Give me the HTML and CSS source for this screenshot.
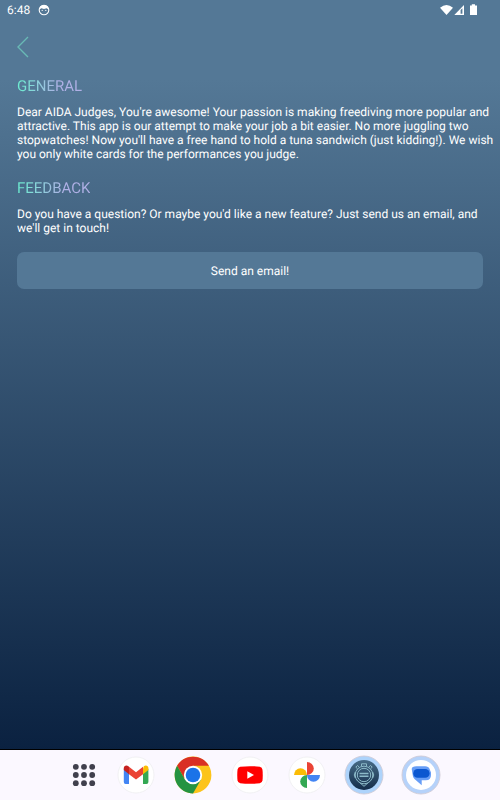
FILE: index.html
```html
<!DOCTYPE html>
<html lang="en">
<head>
<meta charset="utf-8">
<meta name="viewport" content="width=device-width, initial-scale=1">
<title>About</title>
<link rel="stylesheet" href="styles.css">
</head>
<body>
<div class="screen">
  <header class="status">
    <span class="clock">6:48</span>
    <svg class="face" viewBox="0 0 12 12" aria-hidden="true"><circle cx="6" cy="6" r="4.8" fill="none" stroke="#fff" stroke-width="1.1"/><path d="M1.7 5.2Q2 1.2 6 1.1T10.3 5.2L8.6 4.3 6 4.9 3.4 4.3Z" fill="#fff"/><circle cx="4.2" cy="6.4" r=".6" fill="#fff"/><circle cx="7.8" cy="6.4" r=".6" fill="#fff"/></svg>
    <svg class="signals" viewBox="0 0 38 12" aria-hidden="true"><path d="M0 3.7Q6.5-1.6 13 3.7L6.5 11Z" fill="#fff"/><path d="M14.3 11 24 1V11Z" fill="#fff"/><path d="M20.6 9.8V6L22.4 4.2V9.8Z" fill="#547896"/><path d="M30 1.4H31.8V.2H35V1.4H37V11H30Z" fill="#fff"/></svg>
  </header>
  <main class="content">
    <a class="back" href="#" aria-label="Back"><svg viewBox="0 0 12 22" aria-hidden="true"><path d="M11 1 1 11 11 21" fill="none" stroke="#69b9b5" stroke-width="1.4"/></svg></a>
    <section>
      <h2>GENERAL</h2>
      <p>Dear AIDA Judges, You're awesome! Your passion is making freediving more popular and attractive. This app is our attempt to make your job a bit easier. No more juggling two stopwatches! Now you'll have a free hand to hold a tuna sandwich (just kidding!). We wish you only white cards for the performances you judge.</p>
    </section>
    <section>
      <h2>FEEDBACK</h2>
      <p>Do you have a question? Or maybe you'd like a new feature? Just send us an email, and we'll get in touch!</p>
    </section>
    <button class="send" type="button">Send an email!</button>
  </main>
  <nav class="dock" aria-label="Apps">
    <button class="app grid" type="button" aria-label="All apps"><svg viewBox="0 0 24 24"><g fill="#40404d"><circle cx="3.8" cy="3.8" r="2.9"/><circle cx="12" cy="3.8" r="2.9"/><circle cx="20.2" cy="3.8" r="2.9"/><circle cx="3.8" cy="12" r="2.9"/><circle cx="12" cy="12" r="2.9"/><circle cx="20.2" cy="12" r="2.9"/><circle cx="3.8" cy="20.2" r="2.9"/><circle cx="12" cy="20.2" r="2.9"/><circle cx="20.2" cy="20.2" r="2.9"/></g></svg></button>
    <button class="app" type="button" aria-label="Gmail"><svg viewBox="0 0 40 40"><circle cx="20" cy="20" r="18" fill="#fff" stroke="#eeeef0" stroke-width=".8"/><path d="M7.8 14V27Q7.8 29 9.6 29H13V17.5Z" fill="#4285f4"/><path d="M27 17.5V29H30.4Q32.4 29 32.4 27V14Z" fill="#34a853"/><path d="M27 13.7V19.2L32.4 15V13.2C32.4 10.5 29.5 10 27.8 11.3Z" fill="#fbbc04"/><path d="M7.8 15V13.2C7.8 10.5 10.7 10 12.4 11.3L13 11.8V19.2Z" fill="#c5221f"/><path d="M13 19.2V11.8L20 17.2 27 11.8V19.2L20 24.5Z" fill="#ea4335"/></svg></button>
    <button class="app" type="button" aria-label="Chrome"><svg viewBox="0 0 40 40"><circle cx="20" cy="20" r="18.4" fill="#fcc41b"/><path d="M4.1 10.8A18.4 18.4 0 0 1 35.9 10.8H20L12 24.6Z" fill="#d93025"/><path d="M4.1 10.8A18.4 18.4 0 0 0 20 38.4L28 24.6H12Z" fill="#249342"/><circle cx="20" cy="20" r="9.2" fill="#fff"/><circle cx="20" cy="20" r="7.3" fill="#1a73e8"/></svg></button>
    <button class="app" type="button" aria-label="YouTube"><svg viewBox="0 0 40 40"><circle cx="20" cy="20" r="18" fill="#fff" stroke="#eeeef0" stroke-width=".8"/><path d="M10.2 11.7Q20 10.6 29.8 11.7Q32.2 12 32.5 14.7Q33 20 32.5 25.3Q32.2 28 29.8 28.3Q20 29.4 10.2 28.3Q7.8 28 7.5 25.3Q7 20 7.5 14.7Q7.8 12 10.2 11.7Z" fill="#f00"/><path d="M17.3 16.3 24 20 17.3 23.7Z" fill="#fff"/></svg></button>
    <button class="app" type="button" aria-label="Photos"><svg viewBox="0 0 40 40"><circle cx="20" cy="20" r="18" fill="#fff" stroke="#eeeef0" stroke-width=".8"/><path d="M20 7A6.8 6.5 0 0 1 20 20Z" fill="#ea4335"/><path d="M33 20A6.5 6.8 0 0 1 20 20Z" fill="#4285f4"/><path d="M20 33A6.8 6.5 0 0 1 20 20Z" fill="#34a853"/><path d="M7 20A6.5 6.8 0 0 1 20 20Z" fill="#fbbc04"/></svg></button>
    <button class="app" type="button" aria-label="Stopwatch"><svg viewBox="0 0 40 40"><defs><linearGradient id="watch" x1="0" y1="0" x2="0" y2="1"><stop offset="0" stop-color="#466b87"/><stop offset="1" stop-color="#142d4a"/></linearGradient></defs><circle cx="20" cy="20" r="19" fill="#add3fb" stroke="#cfcbd6" stroke-width=".9"/><circle cx="20" cy="20" r="15" fill="url(#watch)"/><g fill="none" stroke="#8cbac8" stroke-width="1"><circle cx="20" cy="20" r="8.8"/><circle cx="20" cy="20" r="6.7"/><path d="M17.5 11.2V8.8H22.5V11.2M13.5 13.8 11.8 12.2 13.4 10.5 15.2 12M26.5 13.8 28.2 12.2 26.6 10.5 24.8 12M16 27.8 20 31.3 24 27.8M11.3 17Q9.2 20 11.3 23M28.7 17Q30.8 20 28.7 23"/><path d="M15.5 18.5H24.5M15.5 21.3H24.5" stroke-width="1.4"/></g></svg></button>
    <button class="app" type="button" aria-label="Messages"><svg viewBox="0 0 40 40"><circle cx="20" cy="20" r="19" fill="#b5d2fa" stroke="#cfcbd6" stroke-width=".9"/><circle cx="20" cy="20" r="15" fill="#fff"/><path d="M15.5 11.2H24.2Q27.5 11.2 28.6 14L30 17.5V20Q30 25.3 24.8 25.3H20.7V30.3L13.5 24Q11.7 22.5 11.5 19L10.7 14Q10.8 11.2 15.5 11.2Z" fill="#669df6"/><rect x="12.2" y="14" width="16.4" height="8.8" rx="4.4" fill="#0b57d0"/></svg></button>
  </nav>
</div>
</body>
</html>
```
FILE: styles.css
```css
* { box-sizing: border-box; }
body {
  margin: 0;
  font-family: Roboto, "Liberation Sans", sans-serif;
  font-size: 12px;
  line-height: 14px;
  color: #fff;
  text-rendering: geometricPrecision;
}
.screen {
  min-height: 100vh;
  display: flex;
  flex-direction: column;
  background: linear-gradient(#547896 10%, #0a2140 94%);
}
.status {
  display: flex;
  align-items: center;
  gap: 8px;
  height: 20px;
  padding: 0 22px 0 7px;
}
.face { width: 12px; height: 12px; }
.signals { width: 38px; height: 12px; margin-left: auto; }
.content {
  flex: 1;
  display: flex;
  flex-direction: column;
  padding: 16px 17px;
}
.back {
  align-self: flex-start;
  height: 23px;
}
.back svg { display: block; width: 12px; height: 22px; }
section { margin-top: 17px; }
h2 {
  width: fit-content;
  margin: 0 0 9px;
  font-size: 15px;
  line-height: 20px;
  font-weight: 400;
  color: transparent;
  background: linear-gradient(90deg, #6beed0, #b0b0e6 65%);
  background-clip: text;
}
p { margin: 0 -14px 0 0; }
.send {
  height: 37px;
  margin-top: 17px;
  border: 0;
  border-radius: 7px;
  background: #547896;
  color: inherit;
  font: inherit;
  text-rendering: inherit;
}
.dock {
  display: flex;
  align-items: center;
  justify-content: center;
  gap: 17px;
  height: 51px;
  padding-left: 10px;
  background: #fbf8ff;
  border-top: 1px solid #000;
}
.app {
  width: 40px;
  height: 40px;
  padding: 0;
  border: 0;
  background: none;
}
.app svg { display: block; width: 100%; height: 100%; }
.grid { width: 30px; height: 30px; padding: 3px; }
```
